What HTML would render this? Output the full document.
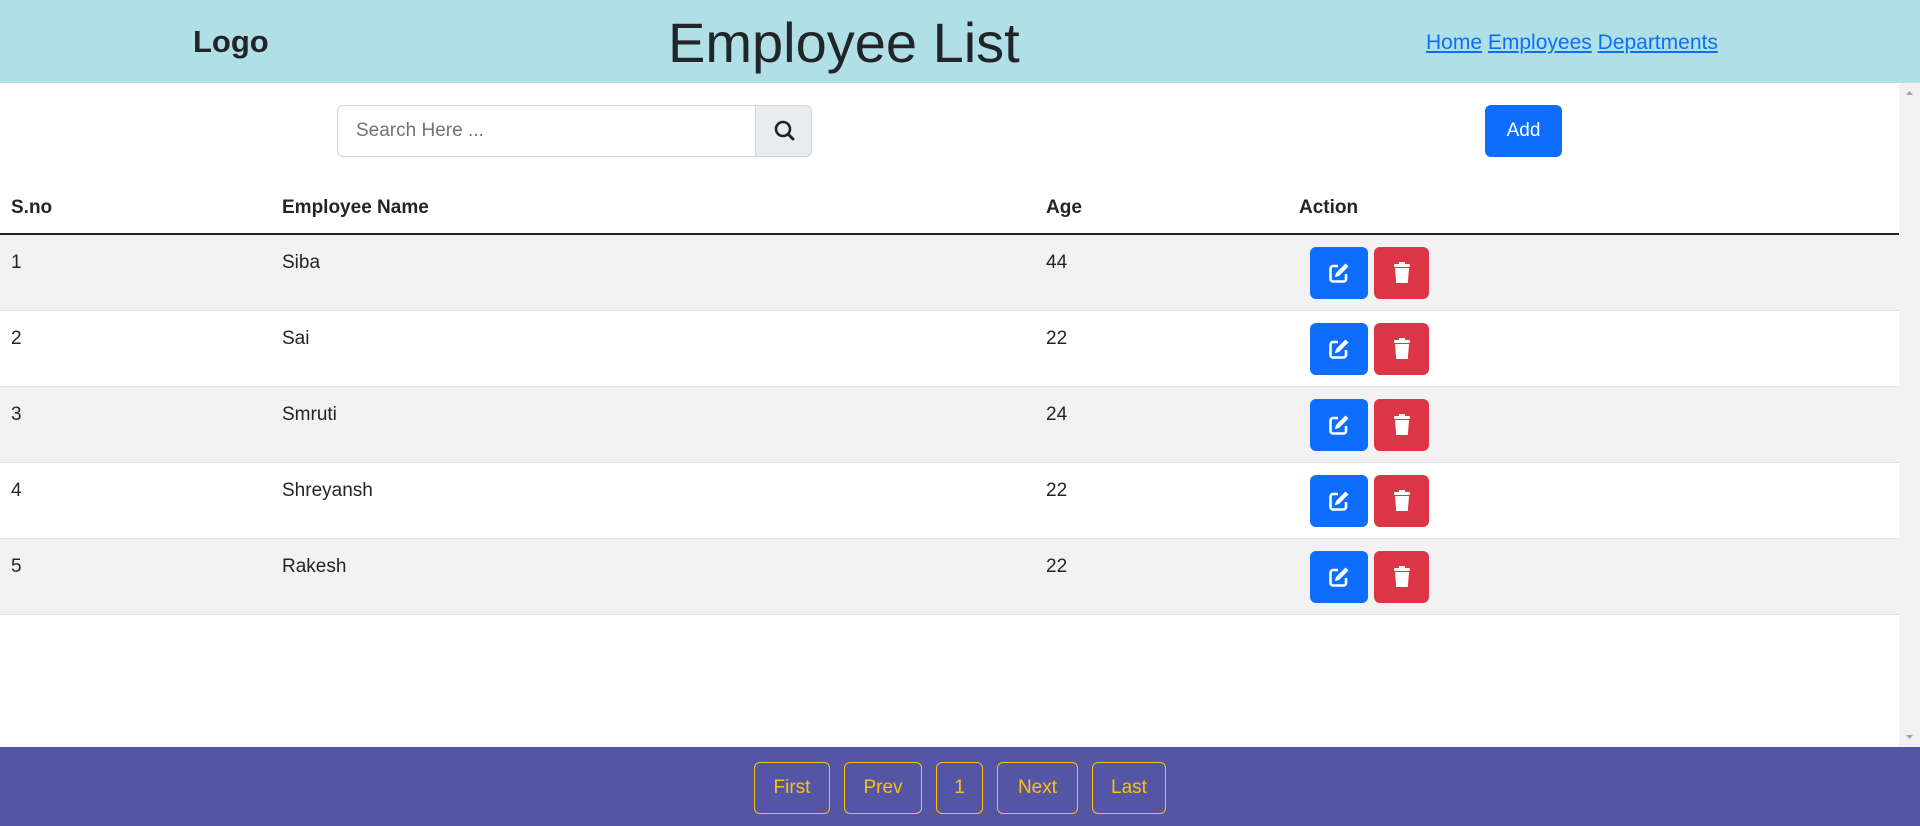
<!DOCTYPE html>
<html><head><meta charset="utf-8"><style>
*{box-sizing:border-box;margin:0;padding:0}
body{width:1920px;height:826px;position:relative;overflow:hidden;background:#fff;font-family:"Segoe UI","Liberation Sans",sans-serif;color:#212529}
.a{position:absolute}
.hdr{left:0;top:0;width:1920px;height:83px;background:#b0e0e6}
.logo{left:193px;top:22px;font-size:31px;font-weight:bold;line-height:40px}
.title{left:668px;top:10px;font-size:56px;line-height:66px}
.nav{left:1426px;top:29px;font-size:21px;line-height:28px}
.nav a{color:#0d6efd;text-decoration:underline}
.inp{left:337px;top:105px;width:419px;height:52px;border:1px solid #ced4da;border-radius:6px 0 0 6px;font-size:19px;color:#6c757d;padding:12px 18px;line-height:26px}
.sbtn{left:755px;top:105px;width:57px;height:52px;border:1px solid #ced4da;border-radius:0 6px 6px 0;background:#e9ecef}
.add{left:1485px;top:105px;width:77px;height:52px;background:#0d6efd;border-radius:6px;color:#fff;font-size:19px;text-align:center;line-height:52px}
.th{top:194px;font-size:19px;font-weight:bold;line-height:28px}
.hl{left:0;top:233px;width:1899px;height:2px;background:#212529}
.row{left:0;width:1899px;height:76px;border-bottom:1px solid #dee2e6}
.row div{position:absolute;top:14px;font-size:19px;line-height:28px}
.e,.d{position:absolute;top:12px;height:52px;border-radius:6px}
.e{left:1310px;width:58px;background:#0d6efd}
.d{left:1374px;width:55px;background:#dc3545}
.e svg,.d svg{position:absolute;left:50%;top:50%;transform:translate(-50%,-50%)}
.sb{left:1899px;top:83px;width:21px;height:664px;background:#f1f1f1}
.ft{left:0;top:747px;width:1920px;height:79px;background:#5555a6}
.pb{top:762px;height:52px;border:1px solid #ffc107;border-radius:6px;color:#ffc107;font-size:19px;text-align:center;line-height:50px}
</style></head><body>
<div class="a hdr"></div>
<div class="a logo">Logo</div>
<div class="a title">Employee List</div>
<div class="a nav"><a>Home</a> <a>Employees</a> <a>Departments</a></div>
<div class="a inp">Search Here ...</div>
<div class="a sbtn"><svg width="57" height="50" viewBox="0 0 57 50"><circle cx="27" cy="23" r="7" fill="none" stroke="#212529" stroke-width="2.6"/><line x1="32" y1="28" x2="37" y2="33" stroke="#212529" stroke-width="3" stroke-linecap="round"/></svg></div>
<div class="a add">Add</div>
<div class="a th" style="left:11px">S.no</div>
<div class="a th" style="left:282px">Employee Name</div>
<div class="a th" style="left:1046px">Age</div>
<div class="a th" style="left:1299px">Action</div>
<div class="a hl"></div>

<div class="a row" style="top:235px;background:#f2f2f2"><div style="left:11px">1</div><div style="left:282px">Siba</div><div style="left:1046px">44</div><span class="e"><svg width="24" height="24" viewBox="0 0 24 24"><path d="M11 5H6a2.5 2.5 0 0 0-2.5 2.5v10.5A2.5 2.5 0 0 0 6 20.5h10.5a2.5 2.5 0 0 0 2.5-2.5v-5" fill="none" stroke="#fff" stroke-width="2.6"/><path d="M18.5 2.5l3 3-9.5 9.5-4.2 1.2 1.2-4.2z" fill="#fff"/></svg></span><span class="d"><svg width="18" height="22" viewBox="0 0 18 22"><rect x="1" y="2" width="16" height="3" rx="1" fill="#fff"/><rect x="6" y="0" width="6" height="3" fill="#fff"/><path d="M2 6h14l-1.2 15H3.2z" fill="#fff"/></svg></span></div>
<div class="a row" style="top:311px"><div style="left:11px">2</div><div style="left:282px">Sai</div><div style="left:1046px">22</div><span class="e"><svg width="24" height="24" viewBox="0 0 24 24"><path d="M11 5H6a2.5 2.5 0 0 0-2.5 2.5v10.5A2.5 2.5 0 0 0 6 20.5h10.5a2.5 2.5 0 0 0 2.5-2.5v-5" fill="none" stroke="#fff" stroke-width="2.6"/><path d="M18.5 2.5l3 3-9.5 9.5-4.2 1.2 1.2-4.2z" fill="#fff"/></svg></span><span class="d"><svg width="18" height="22" viewBox="0 0 18 22"><rect x="1" y="2" width="16" height="3" rx="1" fill="#fff"/><rect x="6" y="0" width="6" height="3" fill="#fff"/><path d="M2 6h14l-1.2 15H3.2z" fill="#fff"/></svg></span></div>
<div class="a row" style="top:387px;background:#f2f2f2"><div style="left:11px">3</div><div style="left:282px">Smruti</div><div style="left:1046px">24</div><span class="e"><svg width="24" height="24" viewBox="0 0 24 24"><path d="M11 5H6a2.5 2.5 0 0 0-2.5 2.5v10.5A2.5 2.5 0 0 0 6 20.5h10.5a2.5 2.5 0 0 0 2.5-2.5v-5" fill="none" stroke="#fff" stroke-width="2.6"/><path d="M18.5 2.5l3 3-9.5 9.5-4.2 1.2 1.2-4.2z" fill="#fff"/></svg></span><span class="d"><svg width="18" height="22" viewBox="0 0 18 22"><rect x="1" y="2" width="16" height="3" rx="1" fill="#fff"/><rect x="6" y="0" width="6" height="3" fill="#fff"/><path d="M2 6h14l-1.2 15H3.2z" fill="#fff"/></svg></span></div>
<div class="a row" style="top:463px"><div style="left:11px">4</div><div style="left:282px">Shreyansh</div><div style="left:1046px">22</div><span class="e"><svg width="24" height="24" viewBox="0 0 24 24"><path d="M11 5H6a2.5 2.5 0 0 0-2.5 2.5v10.5A2.5 2.5 0 0 0 6 20.5h10.5a2.5 2.5 0 0 0 2.5-2.5v-5" fill="none" stroke="#fff" stroke-width="2.6"/><path d="M18.5 2.5l3 3-9.5 9.5-4.2 1.2 1.2-4.2z" fill="#fff"/></svg></span><span class="d"><svg width="18" height="22" viewBox="0 0 18 22"><rect x="1" y="2" width="16" height="3" rx="1" fill="#fff"/><rect x="6" y="0" width="6" height="3" fill="#fff"/><path d="M2 6h14l-1.2 15H3.2z" fill="#fff"/></svg></span></div>
<div class="a row" style="top:539px;background:#f2f2f2"><div style="left:11px">5</div><div style="left:282px">Rakesh</div><div style="left:1046px">22</div><span class="e"><svg width="24" height="24" viewBox="0 0 24 24"><path d="M11 5H6a2.5 2.5 0 0 0-2.5 2.5v10.5A2.5 2.5 0 0 0 6 20.5h10.5a2.5 2.5 0 0 0 2.5-2.5v-5" fill="none" stroke="#fff" stroke-width="2.6"/><path d="M18.5 2.5l3 3-9.5 9.5-4.2 1.2 1.2-4.2z" fill="#fff"/></svg></span><span class="d"><svg width="18" height="22" viewBox="0 0 18 22"><rect x="1" y="2" width="16" height="3" rx="1" fill="#fff"/><rect x="6" y="0" width="6" height="3" fill="#fff"/><path d="M2 6h14l-1.2 15H3.2z" fill="#fff"/></svg></span></div>

<div class="a sb"><svg width="21" height="664"><path d="M7 12l3.5-4 3.5 4z" fill="#a3a3a3"/><path d="M7 652l3.5 4 3.5-4z" fill="#a3a3a3"/></svg></div>
<div class="a ft"></div>
<div class="a pb" style="left:754px;width:76px">First</div>
<div class="a pb" style="left:844px;width:78px">Prev</div>
<div class="a pb" style="left:936px;width:47px">1</div>
<div class="a pb" style="left:997px;width:81px">Next</div>
<div class="a pb" style="left:1092px;width:74px">Last</div>
</body></html>
